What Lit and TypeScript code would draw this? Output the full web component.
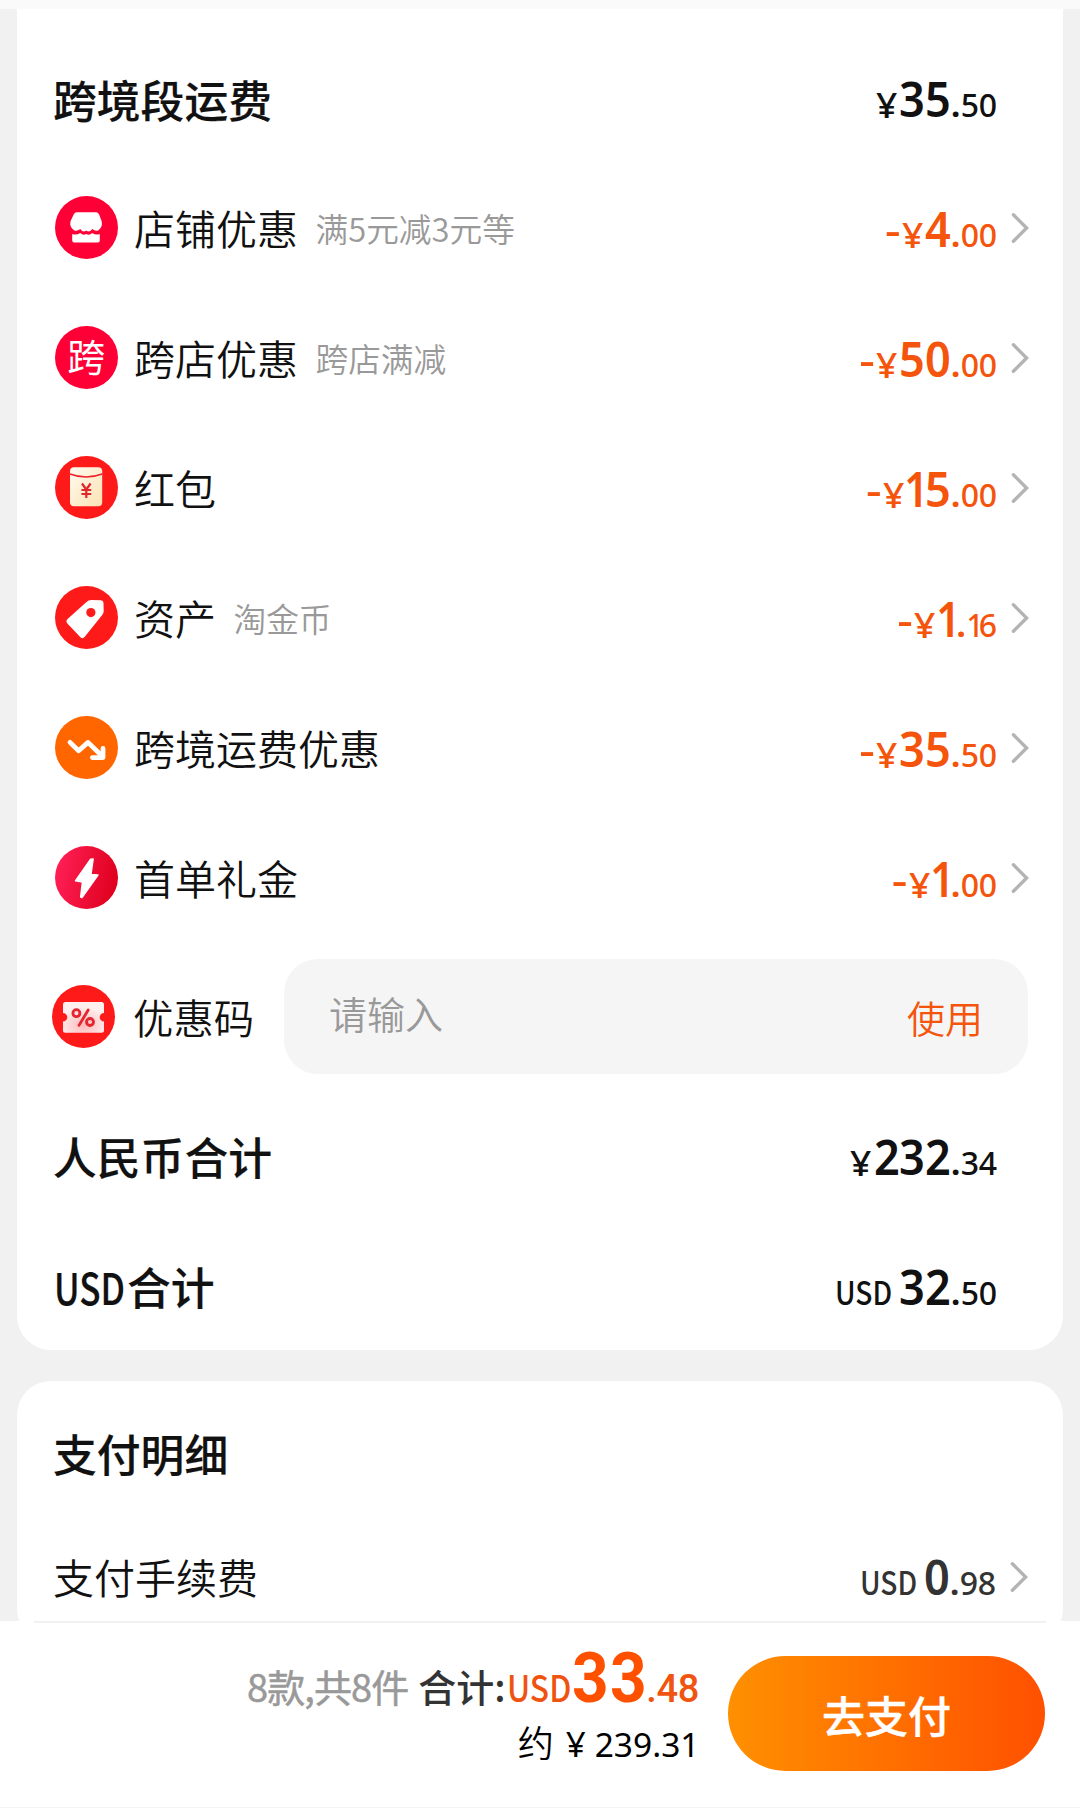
import { LitElement, html, css, svg, nothing, TemplateResult } from "lit";
import { customElement, property } from "lit/decorators.js";

type IconName = "shop" | "cross" | "packet" | "tag" | "trend" | "bolt" | "ticket";

interface Discount {
  icon: IconName;
  label: string;
  note?: string;
  int: string;
  dec: string;
}

const DISCOUNTS: Discount[] = [
  { icon: "shop", label: "店铺优惠", note: "满5元减3元等", int: "4", dec: "00" },
  { icon: "cross", label: "跨店优惠", note: "跨店满减", int: "50", dec: "00" },
  { icon: "packet", label: "红包", int: "15", dec: "00" },
  { icon: "tag", label: "资产", note: "淘金币", int: "1", dec: "16" },
  { icon: "trend", label: "跨境运费优惠", int: "35", dec: "50" },
  { icon: "bolt", label: "首单礼金", int: "1", dec: "00" },
];

const ICONS: Record<IconName, TemplateResult> = {
  shop: svg`
    <circle cx="31.5" cy="31.5" r="31.5" fill="#ff0036"/>
    <path fill="#fff" d="M22 16.3H41Q43 16.3 44 18.3L46.6 25Q48 31 43.5 34.2Q40.5 35.8 37.2 33Q34.5 37 31.2 34.6Q28 37 25.3 33Q22 35.8 19 34.2Q14 31 15.6 25L18.8 18.3Q19.8 16.3 22 16.3Z"/>
    <path fill="#fff" d="M17.2 38Q21.5 39.6 25.2 37Q28.2 40 31.2 38Q34.4 40 37.2 37Q40.8 39.6 44.8 38V44.4Q44.8 46.4 42.8 46.4H19.2Q17.2 46.4 17.2 44.4Z"/>`,
  cross: svg`<circle cx="31.5" cy="31.5" r="31.5" fill="#ff0036"/>
    <text x="31.3" y="45.2" class="glyph" font-size="38" fill="#fff">跨</text>`,
  packet: svg`
    <defs><linearGradient id="cream" x1="0" y1="0" x2="1" y2="1"><stop offset="0" stop-color="#fffaf0"/><stop offset="1" stop-color="#fbe3b4"/></linearGradient></defs>
    <circle cx="31.5" cy="31.5" r="31.5" fill="#ff1a1a"/>
    <rect x="15" y="11.3" width="32.2" height="39" rx="4" fill="url(#cream)"/>
    <path d="M15 18Q31 24 47.2 18" fill="none" stroke="#f0202a" stroke-width="1.6"/>
    <path d="M27 27.5L31.3 33.5L35.6 27.5M31.3 33.5V42M26.4 34H36.2M26.4 38H36.2" fill="none" stroke="#e0282c" stroke-width="2.2"/>`,
  tag: svg`<circle cx="31.5" cy="31.5" r="31.5" fill="#ff1a1a"/>
    <path d="M36.5 14L45.5 14.2Q48.4 14.4 48.5 17.2L48.7 25Q48.7 27 47.4 28.8L29.6 51Q27.6 53.2 25.4 51.2L12.4 37.4Q10.4 35.2 12.6 33L31.2 16.2Q33.4 14.1 36.5 14Z" fill="#fff"/>
    <circle cx="35.9" cy="26.6" r="4.6" fill="#ff1a1a"/>`,
  trend: svg`<circle cx="31.5" cy="31.5" r="31.5" fill="#ff6600"/>
    <path d="M15 26.4L23.6 34.8L33 26.4L47 40" fill="none" stroke="#fff" stroke-width="4.8" stroke-linecap="round" stroke-linejoin="round"/>
    <path d="M48 32.4V41.6H37.4" fill="none" stroke="#fff" stroke-width="4.8" stroke-linecap="round" stroke-linejoin="round"/>`,
  bolt: svg`
    <defs><linearGradient id="crimson" x1="0" y1="0.4" x2="1" y2="0.6"><stop offset="0" stop-color="#ff1f56"/><stop offset="1" stop-color="#de001c"/></linearGradient></defs>
    <circle cx="31.5" cy="31.5" r="31.5" fill="url(#crimson)"/>
    <path d="M35.6 13.2L38.2 13L36 28.4L43 29L27 51.6L25.6 51.2L27.4 36L20.4 34.8Z" fill="#fff" stroke="#fff" stroke-width="1.4" stroke-linejoin="round"/>`,
  ticket: svg`
    <defs><radialGradient id="blush" cx="0.5" cy="0.75" r="0.6"><stop offset="0" stop-color="#ffb9b9"/><stop offset="1" stop-color="#fff0f0"/></radialGradient></defs>
    <circle cx="31.5" cy="31.5" r="31.5" fill="#ff1a1a"/>
    <path d="M13.5 17H49.5Q52 17 52 19.5V28A4.3 4.3 0 0 0 52 36.6V45.2Q52 47.7 49.5 47.7H13.5Q11 47.7 11 45.2V36.6A4.3 4.3 0 0 0 11 28V19.5Q11 17 13.5 17Z" fill="url(#blush)"/>
    <g fill="none" stroke="#e5252f" stroke-width="2.8" stroke-linecap="round"><circle cx="24.4" cy="28.2" r="3.5"/><circle cx="38" cy="37" r="3.5"/><path d="M36.2 25L27 40.4"/></g>`,
};

@customElement("round-icon")
export class RoundIcon extends LitElement {
  @property() name: IconName = "shop";

  static styles = css`
    :host { display: block; width: 63px; height: 63px; flex: none; }
    svg { display: block; }
    .glyph { font-family: "Noto Sans CJK SC", sans-serif; text-anchor: middle; }
  `;

  render() {
    return html`<svg width="63" height="63" viewBox="0 0 63 63">${ICONS[this.name]}</svg>`;
  }
}

// Digits sit in fixed cells, with a narrower cell for "1".
const digits = (value: string) =>
  [...value].map((c) => html`<span class=${c === "1" ? "one" : "digit"}>${c}</span>`);

@customElement("price-text")
export class PriceText extends LitElement {
  @property() cur = "¥";
  @property() int = "";
  @property() dec = "";
  @property({ type: Boolean }) minus = false;

  static styles = css`
    :host {
      display: flex; align-items: baseline; white-space: nowrap; padding-top: 6px;
      font-family: "Noto Sans", "Noto Sans CJK SC", sans-serif; line-height: 60px; font-size: 33px; font-weight: 500;
    }
    :host([minus]) { padding-top: 8px; }
    span { display: block; }
    .minus { font-size: 50px; width: 16px; margin-right: 2px; font-weight: 400; }
    .yen { width: 20.5px; margin-right: 2px; font-size: 34px; transform: translateY(1px) scaleX(1.1); transform-origin: 50% 50%; }
    .usd { width: 55px; margin: 0 9px 0 1px; font: 500 32px/60px "Noto Sans CJK SC", sans-serif; }
    .usd span { width: 63px; transform: scaleX(0.88); transform-origin: 0 50%; }
    .int { display: flex; font-size: 49px; font-weight: 600; }
    .digit { display: flex; justify-content: center; }
    .int .digit { width: 25.8px; transform: scaleX(0.92); }
    .int .one { width: 19px; text-indent: -2px; letter-spacing: -8px; transform: scaleX(0.86); transform-origin: 0 50%; }
    .dot { width: 10px; font-weight: 700; }
    .dec { display: flex; }
    .dec .digit { width: 18px; transform: scaleX(0.97); }
    .dec .one { width: 12.5px; text-indent: -0.5px; letter-spacing: -6px; transform: scaleX(0.9); transform-origin: 0 50%; }
  `;

  render() {
    return html`
      ${this.minus ? html`<span class="minus">-</span>` : nothing}
      ${this.cur === "USD" ? html`<span class="usd"><span>USD</span></span>` : html`<span class="yen">${this.cur}</span>`}
      <span class="int">${digits(this.int)}</span>
      <span class="dot">.</span>
      <span class="dec">${digits(this.dec)}</span>`;
  }
}

@customElement("app-root")
export class AppRoot extends LitElement {
  static styles = css`
    :host {
      display: flex; flex-direction: column; box-sizing: border-box;
      width: 1080px; height: 1808px; overflow: hidden; background: #f1f1f1; color: #111;
      font-family: "Noto Sans CJK SC", sans-serif;
    }
    .strip { height: 9px; flex: none; background: #fafafa; }
    .content { flex: 1; min-height: 0; overflow: hidden; padding: 0 17px; }
    .card { box-sizing: border-box; background: #fff; border-radius: 34px; padding: 0 35px 0 36px; }
    .card.first { border-radius: 0 0 34px 34px; padding-top: 23px; height: 1341px; }
    .card.second { margin-top: 31px; height: 262px; padding-top: 7px; }
    .row { display: flex; align-items: center; height: 130px; }
    .row.head { height: 127px; padding-top: 3px; }
    .title { display: flex; font-size: 43.8px; font-weight: 500; line-height: 60px; -webkit-text-stroke: 0.2px currentColor; }
    .latin { display: block; width: 73px; padding-left: 1px; }
    .latin span { display: block; width: 92px; transform: scaleX(0.8); transform-origin: 0 50%; font-weight: 500; }
    .label { font-size: 41px; line-height: 60px; font-weight: 350; }
    .note { font-size: 32.7px; line-height: 60px; color: #999; margin-left: 17.5px; padding-top: 2px; font-weight: 350; }
    .gap { flex: 1; }
    round-icon { margin: 0 16px 0 2px; }
    .orange { color: #f4540c; }
    .chevron { display: block; width: 18px; height: 32px; margin: 1px -1px 0 14px; flex: none; }
    .plain { margin-right: 31px; }
    .coupon { height: 149px; }
    .coupon round-icon { margin: 0 18px 0 -1px; }
    .coupon .label { font-size: 40.4px; }
    .field {
      display: flex; align-items: center; justify-content: space-between; box-sizing: border-box;
      width: 744px; height: 115px; margin-left: auto; padding: 0 45px 0 45px;
      border-radius: 34px; background: #f5f5f5; font-size: 38px; font-weight: 350;
    }
    .hint { color: #999; padding-bottom: 8px; }
    .fee { height: 116px; padding-right: 1px; }
    .dark { color: #333; }
    .bar {
      flex: none; height: 187px; box-sizing: border-box; background: #fff; display: flex; align-items: flex-start;
      justify-content: flex-end; padding: 21px 35px 0 0; border-bottom: 1px solid #f4f4f4;
      background-image: linear-gradient(#f1f1f1, #f1f1f1); background-size: 1012px 2px;
      background-position: 34px 0; background-repeat: no-repeat;
    }
    .sums { display: flex; flex-direction: column; align-items: flex-end; margin-right: 28px; }
    .total { display: flex; align-items: baseline; height: 74px; line-height: 72px; font-size: 38px; white-space: nowrap; }
    .count { color: #999; letter-spacing: -0.9px; margin-right: 10px; -webkit-text-stroke: 0.5px currentColor; }
    .sum { color: #333; font-weight: 500; margin-right: 1px; }
    .usd { display: block; width: 65px; color: #ef5310; font-weight: 500; font-size: 36px; }
    .usd span { display: block; width: 73px; transform: scaleX(0.88); transform-origin: 0 50%; }
    .big { display: block; width: 74.5px; color: #ff5000; font-family: Roboto, sans-serif; font-weight: 700; font-size: 71px; }
    .big span { display: block; width: 80px; letter-spacing: 1.5px; transform: scaleX(0.9); transform-origin: 0 50%; }
    .cents { color: #f05410; font-family: Roboto, sans-serif; font-weight: 500; font-size: 38px; letter-spacing: -0.3px; margin-right: 1px; }
    .approx { display: flex; align-items: baseline; font-size: 36px; line-height: 50px; color: #000; font-weight: 350; white-space: nowrap; }
    .approx .yen { width: 20px; margin: 0 9px 0 12px; font-family: "Noto Sans", sans-serif; font-weight: 400; font-size: 35px; }
    .approx .num { margin-right: 0.5px; font-family: "Noto Sans", sans-serif; font-weight: 400; font-size: 33.5px; }
    .pay {
      width: 317px; height: 115px; margin-top: 14px; border-radius: 58px; color: #fff; font-size: 43px; font-weight: 500;
      display: flex; align-items: center; justify-content: center; -webkit-text-stroke: 0.4px currentColor;
      background: linear-gradient(90deg, #ff9000, #ff5000);
    }
  `;

  private chevron() {
    return html`<svg class="chevron" viewBox="0 0 18 32">
      <path d="M2.4 2.8L15.6 16L2.4 29.2" fill="none" stroke="#b4b4b4" stroke-width="3.4" stroke-linecap="round" stroke-linejoin="miter"/>
    </svg>`;
  }

  render() {
    return html`
      <div class="strip"></div>
      <div class="content">
        <section class="card first">
          <div class="row head">
            <span class="title">跨境段运费</span><span class="gap"></span>
            <price-text class="plain" int="35" dec="50"></price-text>
          </div>
          ${DISCOUNTS.map(
            (d) => html`<div class="row">
              <round-icon name=${d.icon}></round-icon>
              <span class="label">${d.label}</span>
              ${d.note ? html`<span class="note">${d.note}</span>` : nothing}
              <span class="gap"></span>
              <price-text class="orange" minus int=${d.int} dec=${d.dec}></price-text>
              ${this.chevron()}
            </div>`
          )}
          <div class="row coupon">
            <round-icon name="ticket"></round-icon>
            <span class="label">优惠码</span>
            <div class="field"><span class="hint">请输入</span><span class="orange">使用</span></div>
          </div>
          <div class="row">
            <span class="title">人民币合计</span><span class="gap"></span>
            <price-text class="plain" int="232" dec="34"></price-text>
          </div>
          <div class="row">
            <span class="title"><span class="latin"><span>USD</span></span>合计</span><span class="gap"></span>
            <price-text class="plain" cur="USD" int="32" dec="50"></price-text>
          </div>
        </section>
        <section class="card second">
          <div class="row"><span class="title">支付明细</span></div>
          <div class="row fee">
            <span class="label">支付手续费</span><span class="gap"></span>
            <price-text class="dark" cur="USD" int="0" dec="98"></price-text>
            ${this.chevron()}
          </div>
        </section>
      </div>
      <footer class="bar">
        <div class="sums">
          <div class="total">
            <span class="count">8款,共8件</span><span class="sum">合计:</span>
            <span class="usd"><span>USD</span></span><span class="big"><span>33</span></span><span class="cents">.48</span>
          </div>
          <div class="approx"><span>约</span><span class="yen">¥</span><span class="num">239.31</span></div>
        </div>
        <div class="pay">去支付</div>
      </footer>
    `;
  }
}
